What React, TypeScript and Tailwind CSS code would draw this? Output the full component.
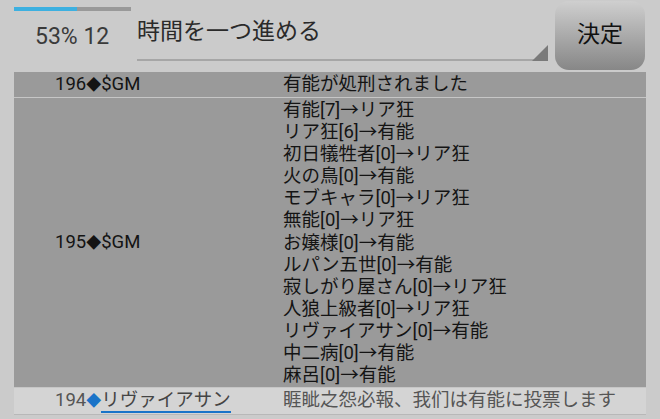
import React from 'react';

const font = { fontFamily: 'Roboto, "Noto Sans CJK JP", sans-serif' };

const changes = [
  '有能[7]→リア狂',
  'リア狂[6]→有能',
  '初日犠牲者[0]→リア狂',
  '火の鳥[0]→有能',
  'モブキャラ[0]→リア狂',
  '無能[0]→リア狂',
  'お嬢様[0]→有能',
  'ルパン五世[0]→有能',
  '寂しがり屋さん[0]→リア狂',
  '人狼上級者[0]→リア狂',
  'リヴァイアサン[0]→有能',
  '中二病[0]→有能',
  '麻呂[0]→有能',
];

const Diamond: React.FC<{ className?: string }> = ({ className = '' }) => (
  <span className={`text-[15px] ${className}`}>◆</span>
);

const App: React.FC = () => {
  return (
    <div className="w-[660px] h-[419px] bg-[#cbcbcb] overflow-hidden text-[#141414]" style={font}>
      {/* Header */}
      <div className="flex h-[72px]">
        <div className="w-[137px] shrink-0 pl-[14px] pt-[7px]">
          <div className="w-[117px] h-[4px] bg-[#999999]">
            <div className="w-[63px] h-full bg-[#3db0e0]" />
          </div>
          <div className="pl-[21px] mt-[12px] text-[23px] leading-[28px] text-[#3a3a3a]">53% 12</div>
        </div>
        <div className="w-[411px] shrink-0 relative">
          <div className="pt-[18px] text-[23px] leading-[28px] text-[#2a2a2a]">時間を一つ進める</div>
          <div className="absolute left-0 right-0 top-[59px] h-[2px] bg-[#a6a6a6]" />
          <svg className="absolute right-0 top-[45px]" width="16" height="16" viewBox="0 0 16 16">
            <polygon points="16,0 16,16 0,16" fill="#7a7a7a" />
          </svg>
        </div>
        <div className="pl-[7px] pt-[1px]">
          <button className="w-[90px] h-[69px] rounded-[14px] bg-gradient-to-b from-[#cfcfcf] to-[#878787] flex items-center justify-center text-[23px] text-[#111111]">
            決定
          </button>
        </div>
      </div>

      {/* Log table */}
      <div className="ml-[14px] w-[632px] text-[18.5px]">
        <div className="flex h-[26px] items-center bg-[#9a9a9a] border-b border-[#c6c6c6]">
          <div className="w-[269px] pl-[41px]">196<Diamond />$GM</div>
          <div>有能が処刑されました</div>
        </div>
        <div className="flex items-center bg-[#9a9a9a] border-b border-[#c6c6c6] py-[1px]">
          <div className="w-[269px] pl-[41px]">195<Diamond />$GM</div>
          <div className="leading-[22.1px]">
            {changes.map((c) => (
              <div key={c}>{c}</div>
            ))}
          </div>
        </div>
        <div className="flex h-[27px] items-center bg-[#d4d4d4] border-b border-[#b8b8b8] text-[#555555]">
          <div className="w-[269px] pl-[41px]">
            194<Diamond className="text-[#1a73c8]" />
            <span className="border-b-2 border-[#1a73c8] text-[#444444]">リヴァイアサン</span>
          </div>
          <div>睚眦之怨必報、我们は有能に投票します</div>
        </div>
      </div>
    </div>
  );
};

export default App;
